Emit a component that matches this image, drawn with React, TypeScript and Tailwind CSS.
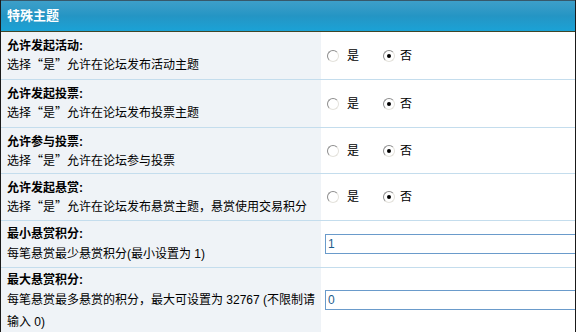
import React from 'react';

interface RadioRow {
  title: string;
  desc: string;
}

const radioRows: RadioRow[] = [
  { title: '允许发起活动:', desc: '允许在论坛发布活动主题' },
  { title: '允许发起投票:', desc: '允许在论坛发布投票主题' },
  { title: '允许参与投票:', desc: '允许在论坛参与投票' },
  { title: '允许发起悬赏:', desc: '允许在论坛发布悬赏主题，悬赏使用交易积分' },
];

const rowHeights = ['h-[48px]', 'h-[48px]', 'h-[46px]', 'h-[47px]'];

function Radio({ checked }: { checked?: boolean }) {
  return (
    <span className="relative inline-flex h-[12px] w-[12px] shrink-0 items-center justify-center rounded-full border border-[#8d8d8d] border-b-[#e4e2dc] border-r-[#e4e2dc] bg-white">
      {checked && <span className="h-[4px] w-[4px] rounded-full bg-black" />}
    </span>
  );
}

const cjk = { fontFamily: "'Noto Sans CJK SC', sans-serif" };

export default function App() {
  return (
    <div
      className="h-[332px] w-[576px] overflow-hidden border-x border-[#1a1a1a] bg-white text-[12px] text-black"
      style={{ fontFamily: "'Liberation Sans', 'Noto Sans CJK SC', sans-serif" }}
    >
      <div className="flex h-[32px] items-center border-b border-t border-b-[#3f4628] border-t-[#37586a] bg-gradient-to-b from-[#3d9fc9] via-[#2495c4] to-[#1aa2d6] pl-[6px] text-[13px] font-bold text-white">
        特殊主题
      </div>

      {radioRows.map((r, i) => (
        <div key={r.title} className={`flex border-b border-[#c4dded] ${rowHeights[i]}`}>
          <div className="w-[320px] shrink-0 bg-[#eff3f7] pl-[6px] pt-[5px]">
            <div className="font-bold leading-[18px]">{r.title}</div>
            <div className="leading-[18px]">
              选择<span style={cjk}>“是”</span>{r.desc}
            </div>
          </div>
          <div className="flex flex-1 items-center pl-[6px]">
            <Radio />
            <span className="ml-[8px]">是</span>
            <span className="ml-[24px] flex items-center">
              <Radio checked />
              <span className="ml-[5px]">否</span>
            </span>
          </div>
        </div>
      ))}

      <div className="flex h-[47px] border-b border-[#c4dded]">
        <div className="w-[320px] shrink-0 bg-[#eff3f7] pl-[6px] pt-[4px]">
          <div className="font-bold leading-[18px]">最小悬赏积分:</div>
          <div className="leading-[22px]">每笔悬赏最少悬赏积分(最小设置为 1)</div>
        </div>
        <div className="flex flex-1 items-center pl-[4px]">
          <input
            type="text"
            defaultValue="1"
            className="h-[20px] w-[300px] shrink-0 border border-[#6a9bcb] px-[2px] text-[12px] text-[#1d5c8c] outline-none"
          />
        </div>
      </div>

      <div className="flex">
        <div className="w-[320px] shrink-0 bg-[#eff3f7] pb-[6px] pl-[6px] pt-[3px]">
          <div className="font-bold leading-[18px]">最大悬赏积分:</div>
          <div className="leading-[22px]">
            每笔悬赏最多悬赏的积分，最大可设置为 32767 (不限制请
            <br />
            输入 0)
          </div>
        </div>
        <div className="flex flex-1 items-start pl-[4px] pt-[22px]">
          <input
            type="text"
            defaultValue="0"
            className="h-[20px] w-[300px] shrink-0 border border-[#6a9bcb] px-[2px] text-[12px] text-[#1d5c8c] outline-none"
          />
        </div>
      </div>
    </div>
  );
}
